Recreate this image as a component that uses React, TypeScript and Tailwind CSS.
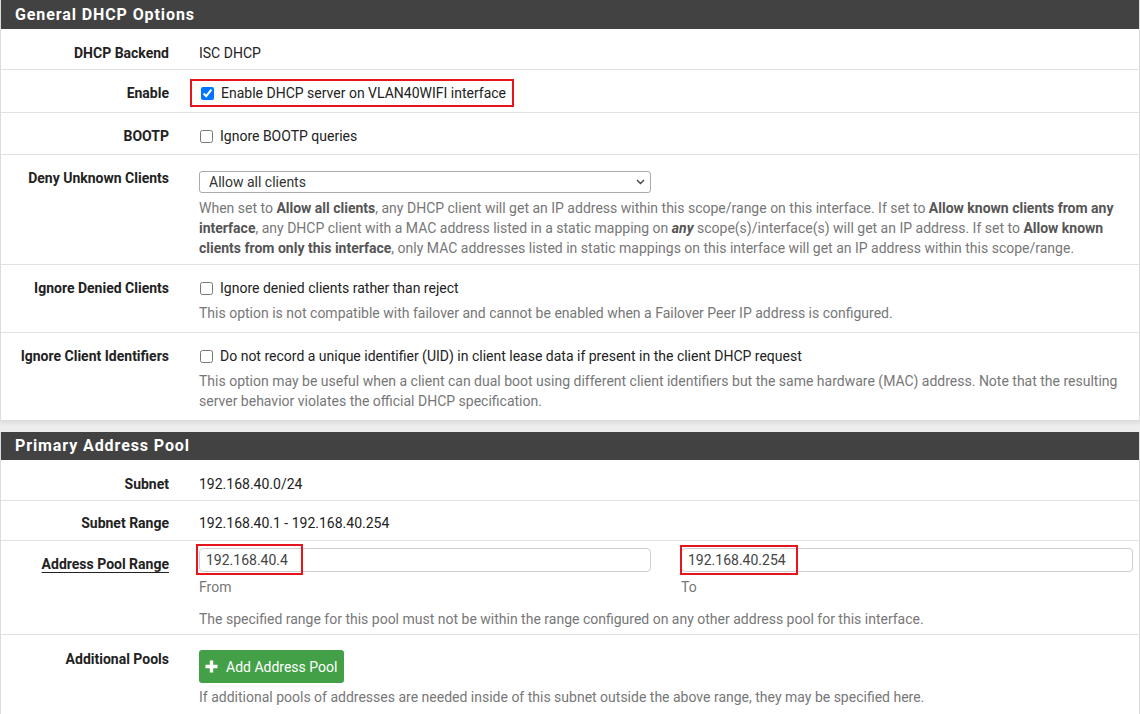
import type { ReactNode } from 'react'

function PanelHeader({ title, h = 'h-[29px]' }: { title: string; h?: string }) {
  return (
    <div className={`${h} bg-[#424242] px-[14px] flex items-center`}>
      <h2 className="text-[16px] font-bold text-white tracking-[0.9px]">{title}</h2>
    </div>
  )
}

function Row({
  label,
  children,
  last,
  labelClass = 'pt-[13px]',
  contentClass = 'pt-[13px] pb-[7px]',
}: {
  label: ReactNode
  children: ReactNode
  last?: boolean
  labelClass?: string
  contentClass?: string
}) {
  return (
    <div className={`flex ${last ? '' : 'border-b border-[#e2e2e2]'}`}>
      <div className={`w-[183px] shrink-0 pr-[15px] text-right font-bold text-[#222] ${labelClass}`}>
        {label}
      </div>
      <div className={`flex-1 pl-[15px] pr-[6px] ${contentClass}`}>{children}</div>
    </div>
  )
}

function Check({ text, checked }: { text: string; checked?: boolean }) {
  return (
    <label className="flex items-center gap-[7px] h-[20px]">
      <input
        type="checkbox"
        defaultChecked={checked}
        className="m-0 ml-[1px] w-[13px] h-[13px]"
      />
      <span>{text}</span>
    </label>
  )
}

function Help({ children, className = 'mt-[5px]' }: { children: ReactNode; className?: string }) {
  return <p className={`text-[#777] leading-[20px] ${className}`}>{children}</p>
}

function AddrInput({ value, mark }: { value: string; mark: string }) {
  return (
    <div className="relative">
      <input
        type="text"
        defaultValue={value}
        className="w-full h-[24px] border border-[#cfcfcf] rounded-[4px] pl-[6px] text-[#444] bg-white outline-none"
      />
      <div className={`absolute border-2 border-[#e8141c] pointer-events-none ${mark}`} />
    </div>
  )
}

export default function App() {
  return (
    <div
      className="min-h-screen bg-[#ededed] text-[14px] leading-[20px] text-[#222]"
      style={{ fontFamily: 'Roboto, "Liberation Sans", sans-serif' }}
    >
      {/* General DHCP Options */}
      <section className="bg-white border-x border-b border-[#dcdcdc] shadow-[0_2px_4px_rgba(0,0,0,0.08)]">
        <PanelHeader title="General DHCP Options" />
        <Row label="DHCP Backend" labelClass="pt-[14px]" contentClass="pt-[14px] pb-[6px]">
          <div>ISC DHCP</div>
        </Row>
        <Row label="Enable" contentClass="pt-[9px] pb-[5px]">
          <div className="inline-flex items-center h-[28px] -ml-[9px] pl-[8px] pr-[6px] border-2 border-[#e8141c]">
            <Check text="Enable DHCP server on VLAN40WIFI interface" checked />
          </div>
        </Row>
        <Row label="BOOTP" contentClass="pt-[13px] pb-[8px]">
          <Check text="Ignore BOOTP queries" />
        </Row>
        <Row label="Deny Unknown Clients" contentClass="pt-[16px] pb-[6px]">
          <div className="relative w-[452px]">
            <select
              defaultValue="all"
              className="appearance-none w-full h-[22px] border border-[#aaa] rounded-[3px] pl-[9px] bg-white text-[#333] leading-[20px] outline-none"
            >
              <option value="all">Allow all clients</option>
              <option value="any">Allow known clients from any interface</option>
              <option value="this">Allow known clients from only this interface</option>
            </select>
            <svg
              className="absolute right-[6px] top-[8px] pointer-events-none"
              width="9"
              height="6"
              viewBox="0 0 9 6"
              fill="none"
            >
              <path d="M1 1l3.5 3.5L8 1" stroke="#444" strokeWidth="1.4" />
            </svg>
          </div>
          <Help>
            When set to <b className="text-[#555]">Allow all clients</b>, any DHCP client will get an IP address within this
            scope/range on this interface. If set to <b className="text-[#555]">Allow known clients from any interface</b>,
            any DHCP client with a MAC address listed in a static mapping on <b className="text-[#555] italic">any</b>{' '}
            scope(s)/interface(s) will get an IP address. If set to{' '}
            <b className="text-[#555]">Allow known clients from only this interface</b>, only MAC addresses listed in static
            mappings on this interface will get an IP address within this scope/range.
          </Help>
        </Row>
        <Row label="Ignore Denied Clients" contentClass="pt-[13px] pb-[9px]">
          <Check text="Ignore denied clients rather than reject" />
          <Help>
            This option is not compatible with failover and cannot be enabled when a Failover Peer IP address is
            configured.
          </Help>
        </Row>
        <Row label="Ignore Client Identifiers" contentClass="pt-[13px] pb-[9px]" last>
          <Check text="Do not record a unique identifier (UID) in client lease data if present in the client DHCP request" />
          <Help>
            This option may be useful when a client can dual boot using different client identifiers but the same hardware
            (MAC) address. Note that the resulting server behavior violates the official DHCP specification.
          </Help>
        </Row>
      </section>

      {/* Primary Address Pool */}
      <section className="mt-[11px] bg-white border-x border-[#dcdcdc]">
        <PanelHeader title="Primary Address Pool" h="h-[28px]" />
        <Row label="Subnet" labelClass="pt-[14px]" contentClass="pt-[14px] pb-[6px]">
          <div>192.168.40.0/24</div>
        </Row>
        <Row label="Subnet Range" labelClass="pt-[12px]" contentClass="pt-[12px] pb-[7px]">
          <div>192.168.40.1 - 192.168.40.254</div>
        </Row>
        <Row
          label={<span className="underline underline-offset-[3px] decoration-[1px]">Address Pool Range</span>}
          labelClass="pt-[13px]"
          contentClass="pt-[7px] pb-[5px]"
        >
          <div className="grid grid-cols-2 gap-x-[30px]">
            <div>
              <AddrInput value="192.168.40.4" mark="-left-[3px] -top-[4px] w-[107px] h-[31px]" />
              <div className="mt-[5px] text-[#777]">From</div>
            </div>
            <div>
              <AddrInput value="192.168.40.254" mark="-left-[1px] -top-[3px] w-[118px] h-[30px]" />
              <div className="mt-[5px] text-[#777]">To</div>
            </div>
          </div>
          <Help className="mt-[12px]">
            The specified range for this pool must not be within the range configured on any other address pool for this
            interface.
          </Help>
        </Row>
        <Row label="Additional Pools" labelClass="pt-[14px]" contentClass="pt-[15px] pb-[8px]" last>
          <button
            type="button"
            className="inline-flex items-center h-[33px] pl-[6px] pr-[7px] gap-[8px] rounded-[3px] bg-[#43a047] text-white"
          >
            <svg width="13" height="13" viewBox="0 0 13 13">
              <path d="M6.5 0.5v12M0.5 6.5h12" stroke="#fff" strokeWidth="3.4" />
            </svg>
            <span>Add Address Pool</span>
          </button>
          <Help className="mt-[4px]">
            If additional pools of addresses are needed inside of this subnet outside the above range, they may be
            specified here.
          </Help>
        </Row>
      </section>
    </div>
  )
}
